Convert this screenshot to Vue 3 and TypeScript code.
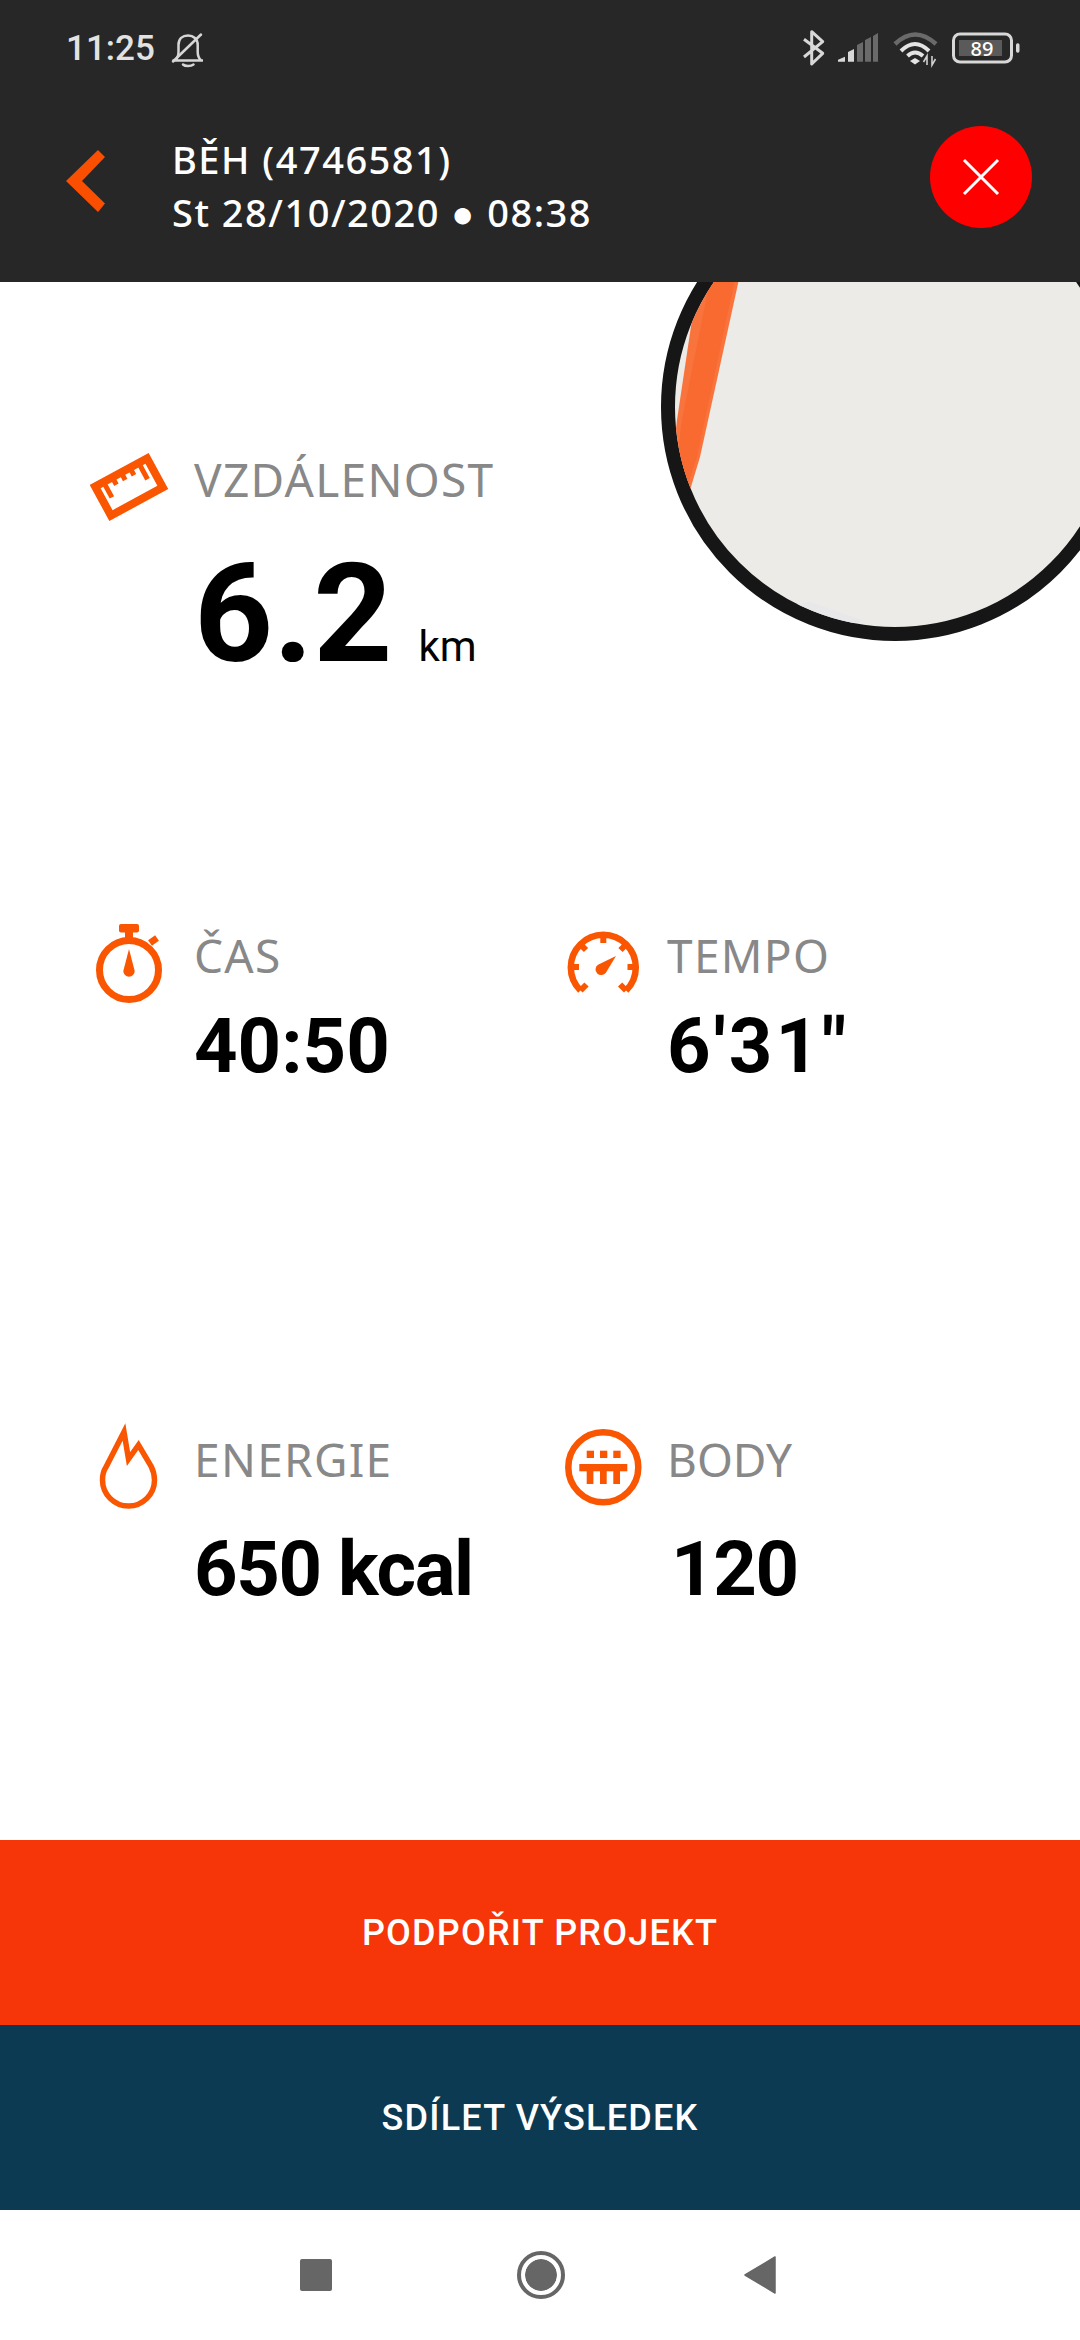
<template>
  <div class="screen">
    <header class="top">
      <div class="status">
        <div class="status-left">
          <span class="clock">11:25</span>
          <svg class="bell" width="36" height="36" viewBox="0 0 36 36" fill="none" stroke="#d6d6d6" stroke-width="2.500">
            <path d="M2.500 28.500H33M5 28.500C8 26 8.500 23 8.500 20V13C8.500 7 12.500 3.500 18 3.500S27.700 7 27.700 13V20C27.700 23 28.500 26 31 28.500" stroke-linejoin="round" />
            <path d="M13 32.500C15 34.500 21 34.500 23.500 32.500" stroke-linecap="round" />
            <path d="M3 29.500 31 2.500" stroke-linecap="round" />
          </svg>
        </div>
        <svg class="status-right" width="260" height="60" viewBox="0 0 260 60" fill="none">
          <path d="M24 19.300 42.700 33.300 31.700 44V11.700L42.700 21.700 24 37" stroke="#d8d8d8" stroke-width="3" stroke-linejoin="round" />
          <path d="M58 41.700v-2l7-3v5zM68 41.700V32l6-3v12.700z" fill="#d8d8d8" />
          <path d="M77 41.700V25l6-3v19.700zM85 41.700V20l6-3v24.700zM93 41.700V16l5-3v28.700z" fill="#6a6a6a" />
          <path d="M115 24Q135 5 156 24" stroke="#6a6a6a" stroke-width="4.500" />
          <path d="M121 31Q135 17 149 31M127.500 36Q135 29 143 36" stroke="#e4e4e4" stroke-width="4" />
          <path d="M130 41l5-3 5 3-5 3.500z" fill="#e4e4e4" />
          <path d="M147 45V36l-3.500 6M152 36v9l3.500-6" stroke="#d0d0d0" stroke-width="1.600" />
          <rect x="173.500" y="14" width="58" height="28" rx="6.500" stroke="#d8d8d8" stroke-width="3" />
          <rect x="179" y="20" width="43" height="16" fill="#5a5a5a" />
          <rect x="236" y="23.300" width="3.500" height="9.500" rx="1.700" fill="#d8d8d8" />
          <text x="202" y="35.500" text-anchor="middle" class="battery-text">89</text>
        </svg>
      </div>
      <div class="title-row">
        <svg class="back" width="40" height="62" viewBox="0 0 40 62">
          <path d="M32 0 39 7 16 31 39 53.500 32 62 0 31z" fill="#fa4f00" />
        </svg>
        <div class="title-text">
          <div>BĚH (4746581)</div>
          <div>St 28/10/2020 ● 08:38</div>
        </div>
        <button class="close" type="button">
          <svg width="38" height="38" viewBox="0 0 38 38" stroke="#fff" stroke-width="3" fill="none">
            <path d="M2 2 36 36M36 2 2 36" />
          </svg>
        </button>
      </div>
    </header>

    <main class="content">
      <div class="map">
        <svg class="route" width="440" height="440" viewBox="675 187 440 440">
          <path d="M700 270 741 270 700 457 690 490 670 480 677 420 693 313z" fill="#f9733c" />
          <path d="M712 270 737 270 697 457 686 490 674 480 682 420z" fill="#f96a30" />
          <path d="M810 602 862 620 800 640 770 610z" fill="#e8e8ea" />
        </svg>
      </div>

      <section class="row row-first">
        <div class="stat">
          <svg class="icon" width="100" height="100" viewBox="0 0 100 100" fill="none" stroke="#fa5500">
            <g transform="translate(39 58) rotate(-28.500)">
              <rect x="-29.500" y="-16.500" width="59" height="33" stroke-width="8" />
              <path d="M-20-17v18M-10-17v9M0-17v9M10-17v9M20-17v19" stroke-width="5" />
            </g>
          </svg>
          <div class="label">VZDÁLENOST</div>
          <div class="value big">6.2<span class="unit">km</span></div>
        </div>
      </section>

      <section class="row row-second">
        <div class="stat">
          <svg class="icon" width="100" height="100" viewBox="0 0 100 100" fill="#fa5500" stroke="none">
            <circle cx="39" cy="65" r="29.500" fill="none" stroke="#fa5500" stroke-width="7" />
            <rect x="29" y="19" width="20" height="8.500" rx="2" />
            <rect x="35" y="26" width="8" height="8" />
            <path d="M60 38 67 33" fill="none" stroke="#fa5500" stroke-width="6.500" />
            <path d="M39 44 44.700 66a5.700 5.700 0 1 1-11.400 0z" />
          </svg>
          <div class="label">ČAS</div>
          <div class="value second">40:50</div>
        </div>
        <div class="stat">
          <svg class="icon" width="100" height="100" viewBox="0 0 100 100" fill="#fa5500" stroke="none">
            <path d="M17.500 85.500a32.500 32.500 0 1 1 45.600 0" fill="none" stroke="#fa5500" stroke-width="6.500" />
            <path d="M40.300 30v8M17 39l6 6M63.500 39l-6 6M8 62h8M64.500 62h8M17.500 85.500l6-6M63.100 85.500l-6-6" fill="none" stroke="#fa5500" stroke-width="6" />
            <path d="M53 51 43 67.500a5.700 5.700 0 1 1-8-7.800z" />
          </svg>
          <div class="label">TEMPO</div>
          <div class="value second tempo">6'31"</div>
        </div>
      </section>

      <section class="row row-third">
        <div class="stat">
          <svg class="icon" width="100" height="100" viewBox="0 0 100 100" fill="none" stroke="#fa5500" stroke-width="5.500">
            <path d="M34 23 38.500 50 48.500 36 61 57C63 61 64.500 66 64.500 71A26 26 0 0 1 12.500 71C12.500 66 14 61 16 58Z" />
          </svg>
          <div class="label">ENERGIE</div>
          <div class="value third">650 kcal</div>
        </div>
        <div class="stat">
          <svg class="icon" width="100" height="100" viewBox="0 0 100 100" fill="#fa5500" stroke="none">
            <circle cx="40.300" cy="58.300" r="35" fill="none" stroke="#fa5500" stroke-width="6.500" />
            <rect x="23.700" y="41.700" width="7.300" height="7.300" />
            <rect x="37" y="41.700" width="7.300" height="7.300" />
            <rect x="50.300" y="41.700" width="7.300" height="7.300" />
            <rect x="16.300" y="55" width="48" height="7.300" />
            <rect x="23.700" y="62" width="6.700" height="13" />
            <rect x="37" y="62" width="6.700" height="13" />
            <rect x="50.300" y="62" width="6.700" height="13" />
          </svg>
          <div class="label narrow">BODY</div>
          <div class="value third indent">120</div>
        </div>
      </section>
    </main>

    <button class="action support" type="button">PODPOŘIT PROJEKT</button>
    <button class="action share" type="button">SDÍLET VÝSLEDEK</button>

    <nav class="navbar">
      <span class="nav-square"></span>
      <span class="nav-circle"></span>
      <svg width="32" height="38" viewBox="0 0 32 38"><path d="M31 1v36L1 19z" fill="#666" stroke="#666" stroke-width="1.500" stroke-linejoin="round" /></svg>
    </nav>
  </div>
</template>

<script setup lang="ts">
</script>

<style>
html,
body {
  margin: 0;
  background: #fff;
}
</style>

<style scoped>
.screen {
  width: 1080px;
  height: 2340px;
  display: flex;
  flex-direction: column;
  overflow: hidden;
  font-family: "Noto Sans", Roboto, sans-serif;
}

/* hlavicka */
.top {
  height: 282px;
  background: #272727;
  color: #fff;
  flex-shrink: 0;
  position: relative;
  z-index: 2;
}

.status {
  height: 100px;
  padding: 0 40px 0 66px;
  display: flex;
  align-items: center;
  justify-content: space-between;
}

.status-left {
  display: flex;
  align-items: center;
  gap: 15px;
}

.clock {
  font-family: Roboto, sans-serif;
  font-size: 35px;
  font-weight: 500;
  color: #e2e2e2;
  margin-top: -3px;
}

.title-row {
  height: 154px;
  display: flex;
  align-items: center;
  padding: 0 48px 0 66px;
}

.back {
  margin-top: 8px;
}

.title-text {
  margin-left: 66px;
  margin-top: 18px;
  font-size: 38px;
  line-height: 53px;
  font-weight: 500;
  letter-spacing: 1.500px;
  flex: 1;
}

.close {
  width: 102px;
  height: 102px;
  border: none;
  border-radius: 50%;
  background: #ff0000;
  display: flex;
  align-items: center;
  justify-content: center;
  padding: 0;
}

.battery-text {
  font-size: 20px;
  font-weight: 500;
  fill: #fff;
}

/* obsah */
.content {
  flex: 1;
  position: relative;
  overflow: hidden;
  background: #fff;
}

.map {
  position: absolute;
  left: 661px;
  top: -109px;
  width: 468px;
  height: 468px;
  box-sizing: border-box;
  border: 14px solid #161616;
  border-radius: 50%;
  background: #ecebe7;
  overflow: hidden;
}

.route {
  display: block;
}

.row {
  display: flex;
  padding-left: 90px;
}

.row-first {
  padding-top: 167px;
}

.row-second {
  padding-top: 203px;
}

.row-third {
  padding-top: 338px;
}

.stat {
  width: 473px;
  display: grid;
  grid-template-columns: 104px 1fr;
  grid-template-rows: 60px auto;
}

.icon {
  grid-row: 1 / 3;
  margin-top: -20px;
}

.label {
  font-size: 46px;
  line-height: 60px;
  letter-spacing: 1.300px;
  color: #888;
}

.narrow {
  letter-spacing: 0;
}

.value {
  grid-column: 2;
  font-family: Roboto, sans-serif;
  font-size: 76px;
  line-height: 90px;
  font-weight: 700;
  color: #000;
}

.big {
  font-size: 138px;
  line-height: 150px;
  margin-top: 30px;
}

.unit {
  font-size: 42px;
  font-weight: 400;
  margin-left: 26px;
}

.second {
  margin-top: 16px;
}

.tempo {
  letter-spacing: 3px;
}

.third {
  margin-top: 35px;
  letter-spacing: -1.400px;
}

.indent {
  margin-left: 4px;
}

/* tlacitka */
.action {
  height: 185px;
  flex-shrink: 0;
  border: none;
  color: #fff;
  font-family: Roboto, sans-serif;
  font-size: 36px;
  font-weight: 500;
  letter-spacing: 1.200px;
  padding: 0;
}

.support {
  background: #f63609;
}

.share {
  background: #0b3a52;
}

.navbar {
  height: 130px;
  flex-shrink: 0;
  box-sizing: border-box;
  padding: 0 0 0 300px;
  background: #fff;
  display: flex;
  align-items: center;
}

.nav-square {
  width: 32px;
  height: 32px;
  border-radius: 2px;
  background: #666;
}

.nav-circle {
  width: 32px;
  height: 32px;
  margin-left: 185px;
  border: 4px solid #666;
  border-radius: 50%;
  background: #666;
  box-shadow: inset 0 0 0 4px #fff;
  padding: 4px;
  background-clip: content-box;
}

.navbar svg {
  margin-left: 179px;
}
</style>
